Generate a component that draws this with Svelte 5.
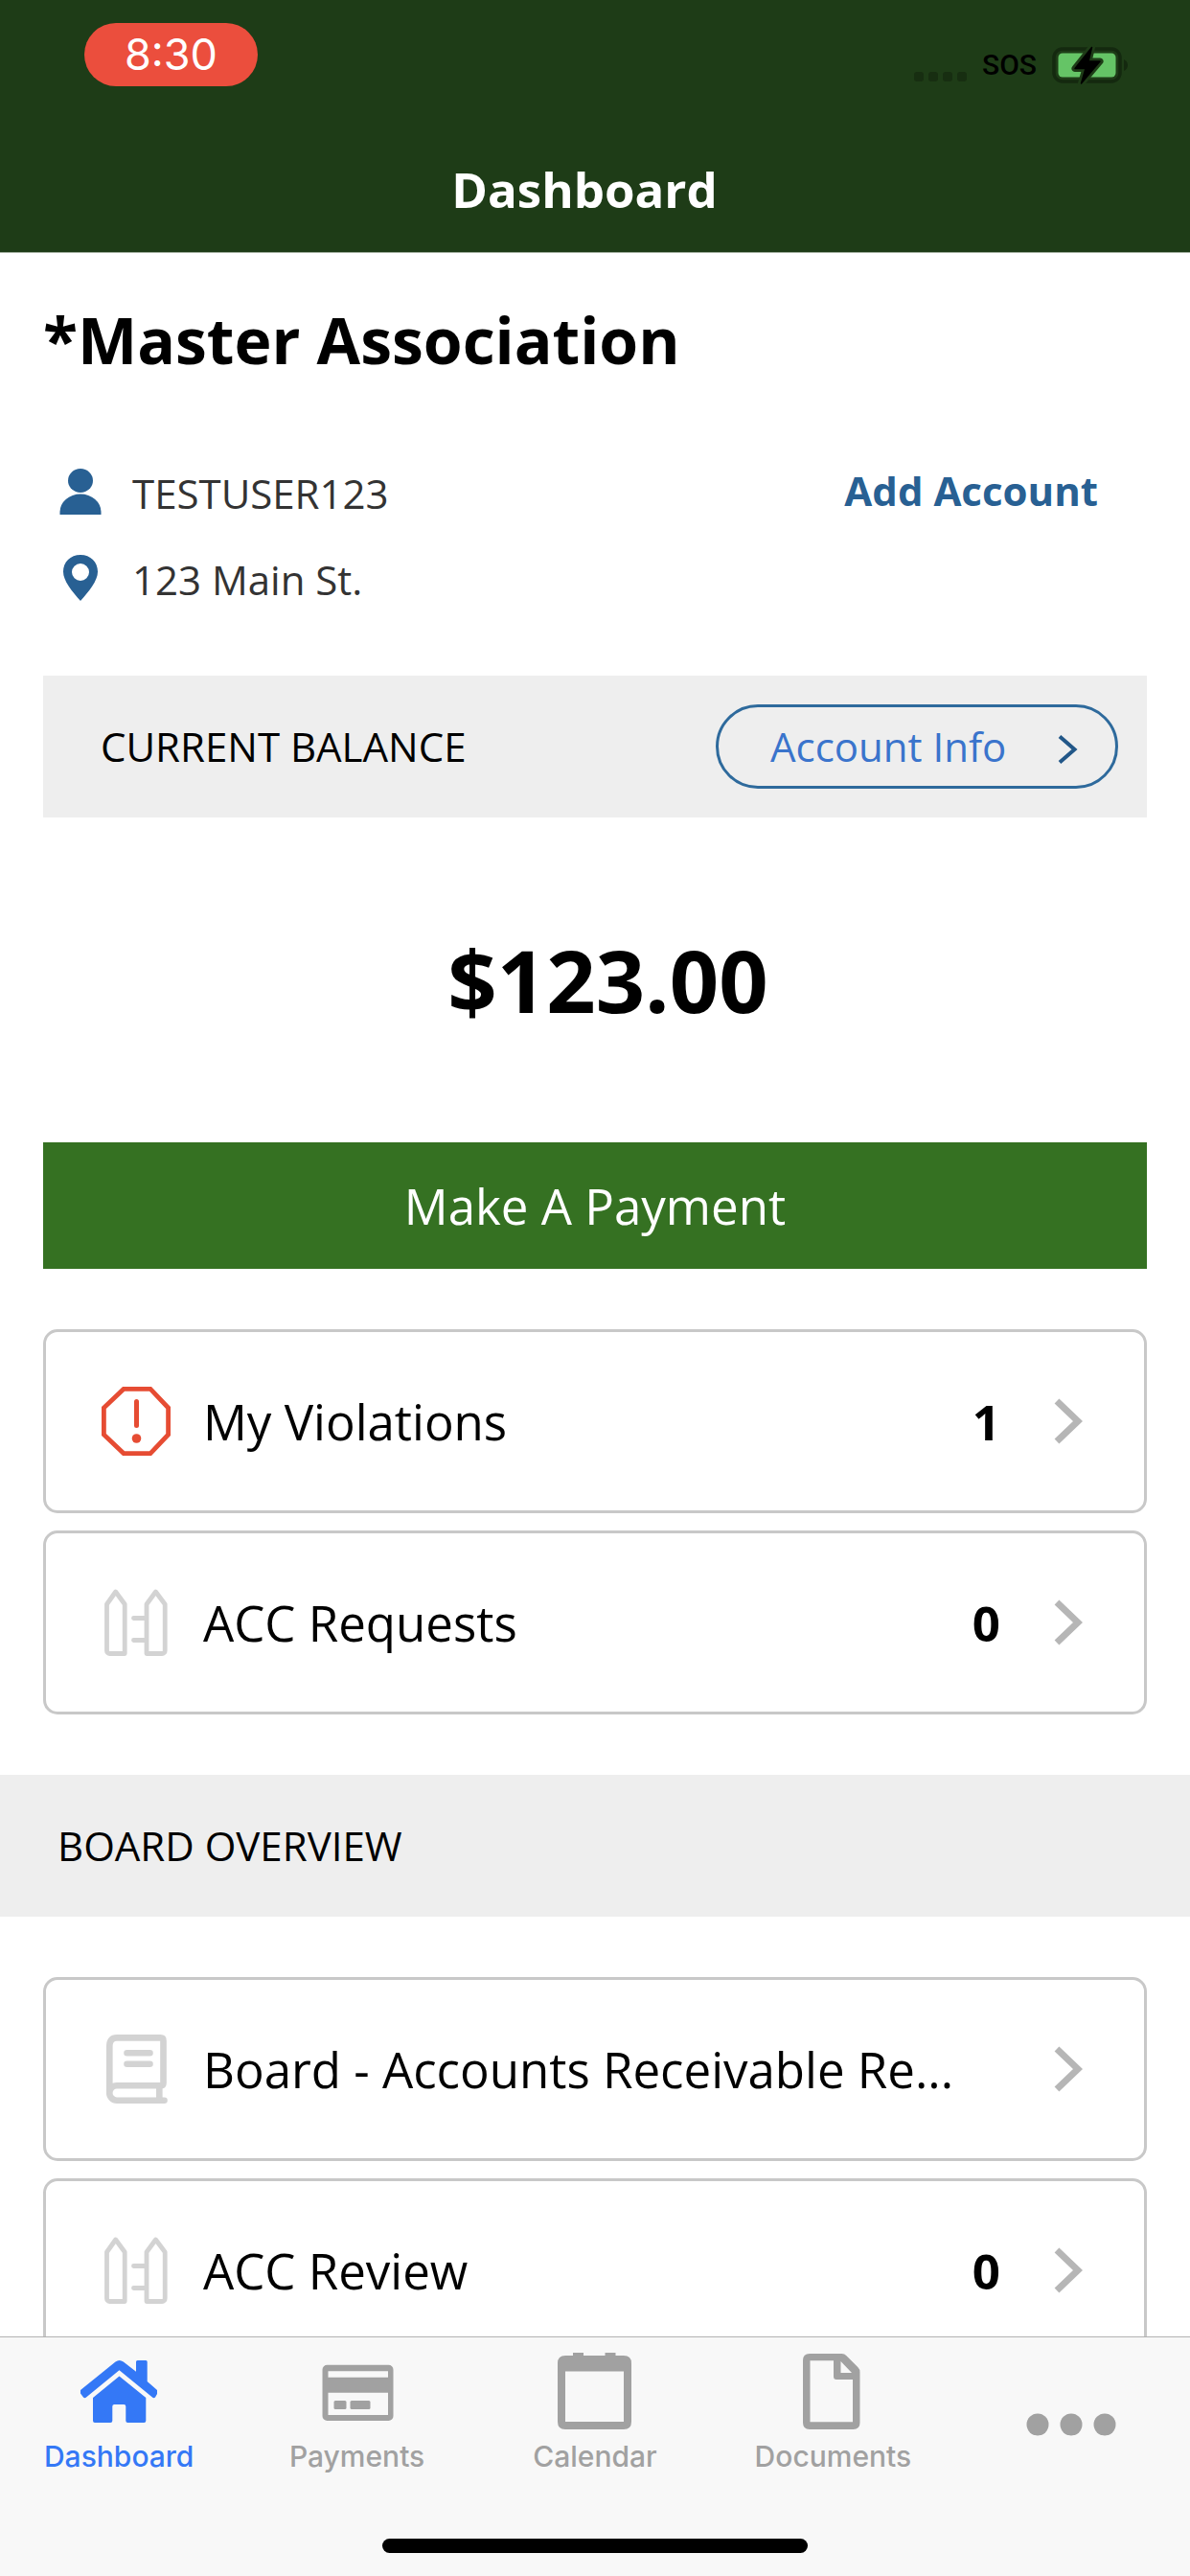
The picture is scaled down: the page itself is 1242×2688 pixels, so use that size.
<script>
    let title = 'Dashboard';
    let association = '*Master Association';
    let account = { user: 'TESTUSER123', address: '123 Main St.', balance: '$123.00' };

    const ownerItems = [
        { icon: 'violation', label: 'My Violations', count: 1 },
        { icon: 'fence', label: 'ACC Requests', count: 0 }
    ];

    const boardItems = [
        { icon: 'book', label: 'Board - Accounts Receivable Re...' },
        { icon: 'fence', label: 'ACC Review', count: 0 }
    ];

    const tabs = ['Dashboard', 'Payments', 'Calendar', 'Documents'];
    let active = 'Dashboard';
</script>

{#snippet itemList(items)}
    <ul class="items">
        {#each items as item}
            <li>
                <button class="item">
                    <svg class="item-icon {item.icon}" viewBox="0 0 72 72" aria-hidden="true">
                        {#if item.icon === 'violation'}
                            <path d="M23 2.4h28L69.6 22v28L51 69.6H23L2.4 50V22z" stroke-width="4.8" />
                            <path d="M36.5 15.5v25" stroke-width="5" stroke-linecap="round" />
                            <circle class="solid" cx="36.5" cy="54" r="4.8" />
                        {:else if item.icon === 'fence'}
                            <path d="M5.5 17l9.2-13 9.5 13v51.5H8.5a3 3 0 0 1-3-3z" stroke-width="4.8" stroke-linejoin="round" />
                            <path d="M47 17l9.5-13 9.7 13v48.5a3 3 0 0 1-3 3H47z" stroke-width="4.8" stroke-linejoin="round" />
                            <path d="M33.5 31.5H46M33.5 54.5H46" stroke-width="4.8" stroke-linecap="round" />
                        {:else}
                            <path d="M8.3 61V12Q8.3 3.4 16 3.4h45.5q3 0 3 3v44.5q0 2.300-3 2.300H16a7.7 7.7 0 0 0 0 15.500h49.5" stroke-width="6.6" stroke-linecap="round" />
                            <path d="M60.3 53v15" stroke-width="6.6" />
                            <path d="M26.5 19.3h24M26.5 30.7h24" stroke-width="6.6" stroke-linecap="round" />
                        {/if}
                    </svg>
                    <span class="item-label">{item.label}</span>
                    {#if item.count !== undefined}
                        <strong class="count">{item.count}</strong>
                    {/if}
                    <svg class="arrow" viewBox="0 0 30 48" aria-hidden="true">
                        <path d="M3 3l22 21L3 45" />
                    </svg>
                </button>
            </li>
        {/each}
    </ul>
{/snippet}

<div class="app">
    <header>
        <div class="status">
            <span class="clock">8:30</span>
            <div class="signals">
                <span class="dots"><i></i><i></i><i></i><i></i></span>
                <span class="sos">SOS</span>
                <svg class="battery" viewBox="0 0 80 42" aria-hidden="true">
                    <rect x="2" y="4" width="69" height="34" rx="9" fill="none" stroke="#14290f" stroke-width="3.5" />
                    <path d="M75 15q4 2 4 6t-4 6z" fill="#14290f" />
                    <rect x="6.500" y="8.500" width="60" height="25" rx="4.500" fill="#65c466" />
                    <path d="M41.500 2.500L24 24.500h11L30.500 40l19.500-23H38z" fill="#000" stroke="#1e3c17" stroke-width="7" stroke-linejoin="round" />
                    <path d="M41.500 2.500L24 24.500h11L30.500 40l19.500-23H38z" fill="#000" stroke="#000" stroke-width="1.500" stroke-linejoin="round" />
                </svg>
            </div>
        </div>
        <h1>{title}</h1>
    </header>

    <main>
        <section class="panel">
            <h2>{association}</h2>

            <div class="account">
                <div class="details">
                    <div class="detail">
                        <svg viewBox="0 0 48 48" aria-hidden="true">
                            <ellipse cx="24" cy="12.500" rx="13" ry="12.500" />
                            <path d="M2.500 48V45a21.500 18.500 0 0 1 43 0v3z" />
                        </svg>
                        <span>{account.user}</span>
                    </div>
                    <div class="detail">
                        <svg viewBox="0 0 48 48" aria-hidden="true">
                            <path fill-rule="evenodd" d="M24 0C13.500 0 6 7.500 6 17.500 6 27 15 38 24 48c9-10 18-21 18-30.500C42 7.500 34.500 0 24 0zm0 9a9 9 0 1 1 0 18 9 9 0 0 1 0-18z" />
                        </svg>
                        <span>{account.address}</span>
                    </div>
                </div>
                <a class="add" href="#add">Add Account</a>
            </div>

            <div class="balance-bar">
                <span>CURRENT BALANCE</span>
                <button class="info">
                    Account Info
                    <svg viewBox="0 0 22 30" aria-hidden="true">
                        <path d="M2 1.500L17.500 15 2 28.500" />
                    </svg>
                </button>
            </div>

            <p class="amount">{account.balance}</p>
            <button class="pay">Make A Payment</button>

            {@render itemList(ownerItems)}
        </section>

        <h3>BOARD OVERVIEW</h3>

        <section class="panel">
            {@render itemList(boardItems)}
        </section>
    </main>

    <nav>
        <div class="tabs">
            {#each tabs as tab}
                <button class="tab" class:active={tab === active} on:click={() => (active = tab)}>
                    <svg viewBox="0 0 84 84" fill-rule="evenodd" aria-hidden="true">
                        {#if tab === 'Dashboard'}
                            <path d="M38.500 11.500q4-3 8.300 0L60 21.700V11.500q0-1.500 1.500-1.500h8.700q1.500 0 1.500 1.500V32L82 41v4l-2 3.500q-1.500 1.500-3 0L42.500 20.300 8 48.500q-1.500 1.500-3 0L2 44.500V41z" />
                            <path d="M42.500 26.500L70.300 49v24q0 2-2 2H51.300q-2 0-2-2V58q0-2-2-2h-10q-2 0-2 2v15q0 2-2 2H17q-2 0-2-2V49z" />
                        {:else if tab === 'Payments'}
                            <path d="M10.500 14.700h64a5 5 0 0 1 5 5V68a5 5 0 0 1-5 5h-64a5 5 0 0 1-5-5V19.700a5 5 0 0 1 5-5zM11.500 21.300v6.500h62.500v-6.500zM11.500 43.700V67h62.500V43.700z" />
                            <rect x="17.500" y="52" width="13" height="9" rx="1.500" />
                            <rect x="34.500" y="52" width="21" height="9" rx="1.500" />
                        {:else if tab === 'Calendar'}
                            <path d="M11 5h8V2h11v3h22.500V2h11v3H72q8 0 8 8v61q0 8-8 8H11q-8 0-8-8V13q0-8 8-8zm0 16.500V74h61V21.500z" />
                        {:else}
                            <path d="M18 3h33.500q3 0 5 2.300l12 12q2 2 2 5V75q0 7-7 7H18q-7 0-7-7V10q0-7 7-7zm.5 7.300v64h44.500V30H46q-3 0-3-3V10.300zM50.500 11v12H62z" />
                        {/if}
                    </svg>
                    <span>{tab}</span>
                </button>
            {/each}
            <button class="tab more" aria-label="More">
                <svg viewBox="0 0 94 24" aria-hidden="true">
                    <circle cx="12" cy="12" r="11.500" />
                    <circle cx="47" cy="12" r="11.500" />
                    <circle cx="82" cy="12" r="11.500" />
                </svg>
            </button>
        </div>
        <div class="home-indicator"></div>
    </nav>
</div>

<style>
    :global(body) {
        background: #fff;
    }
    .app {
        display: flex;
        flex-direction: column;
        height: 100vh;
        font: 42px/60px "Open Sans", sans-serif;
        color: #000;
    }
    h1, h2, h3, p, ul {
        margin: 0;
        padding: 0;
    }
    button {
        margin: 0;
        padding: 0;
        border: none;
        background: none;
        color: inherit;
        font: inherit;
        cursor: pointer;
    }
    svg {
        flex: none;
    }

    header {
        flex: none;
        background: #1e3c17;
        border-bottom: 1px solid #a5b1a2;
    }
    .status {
        display: flex;
        justify-content: space-between;
        align-items: flex-start;
        box-sizing: border-box;
        height: 131px;
        padding: 24px 64px 0 88px;
    }
    .clock {
        width: 181px;
        border-radius: 33px;
        background: #eb4e3d;
        color: #fff;
        font: 45px/66px Inter, sans-serif;
        text-align: center;
    }
    .signals {
        display: flex;
        align-items: center;
        gap: 16px;
        height: 88px;
    }
    .dots {
        display: flex;
        gap: 5px;
        padding-top: 24px;
    }
    .dots i {
        width: 10px;
        height: 10px;
        border-radius: 3px;
        background: #172e11;
    }
    .sos {
        color: #000;
        font: 500 30px/40px Roboto, sans-serif;
    }
    .battery {
        width: 80px;
        height: 42px;
    }
    h1 {
        padding-right: 22px;
        color: #fff;
        font-size: 51px;
        line-height: 132px;
        text-align: center;
    }

    main {
        flex: 1;
        min-height: 0;
        overflow-y: auto;
        scrollbar-width: none;
    }
    .panel {
        display: flex;
        flex-direction: column;
        padding: 0 45px;
    }
    h2 {
        padding: 45px 0 86px;
        font-size: 66px;
        line-height: 90px;
    }
    .account {
        display: flex;
        justify-content: space-between;
        align-items: flex-start;
        padding: 0 51px 70px 15px;
    }
    .details {
        display: flex;
        flex-direction: column;
        gap: 30px;
        color: #333;
    }
    .detail {
        display: flex;
        align-items: center;
        gap: 30px;
    }
    .detail svg {
        width: 48px;
        height: 48px;
        margin-bottom: 4px;
        fill: #286093;
    }
    .add {
        color: #286093;
        font-weight: bold;
        line-height: 54px;
        text-decoration: none;
    }
    .balance-bar {
        display: flex;
        justify-content: space-between;
        align-items: center;
        height: 148px;
        padding: 0 30px 0 60px;
        background: #eee;
    }
    .info {
        display: flex;
        justify-content: space-between;
        align-items: center;
        box-sizing: border-box;
        width: 420px;
        height: 88px;
        padding: 0 38px 0 54px;
        border: 3px solid #2e6a9c;
        border-radius: 44px;
        color: #3a74cc;
    }
    .info svg {
        width: 22px;
        height: 30px;
        margin-top: 6px;
        fill: none;
        stroke: #225788;
        stroke-width: 4;
    }
    .amount {
        padding: 109px 0 110px 27px;
        font-size: 90px;
        font-weight: bold;
        line-height: 120px;
        text-align: center;
    }
    .pay {
        height: 132px;
        background: #357122;
        color: #fff;
        font-size: 51px;
    }

    .items {
        display: flex;
        flex-direction: column;
        gap: 18px;
        padding: 63px 0;
        list-style: none;
    }
    .item {
        display: flex;
        align-items: center;
        box-sizing: border-box;
        width: 100%;
        height: 192px;
        padding: 0 64px 0 58px;
        border: 3px solid #c8c8c8;
        border-radius: 15px;
        font-size: 51px;
        line-height: 72px;
        text-align: left;
    }
    .item-icon {
        width: 72px;
        height: 72px;
        margin-right: 34px;
        fill: none;
        stroke: #d3d3d3;
    }
    .item-icon.violation {
        stroke: #e64c33;
    }
    .solid {
        fill: #e64c33;
        stroke: none;
    }
    .item-label {
        flex: 1;
        white-space: nowrap;
    }
    .arrow {
        width: 30px;
        height: 48px;
        margin-left: 56px;
        fill: none;
        stroke: #b6b6b6;
        stroke-width: 7;
    }
    h3 {
        padding: 0 60px;
        background: #eee;
        font-size: 42px;
        font-weight: normal;
        line-height: 148px;
    }

    nav {
        flex: none;
        padding: 14px 0 24px;
        border-top: 1px solid #b2b2b2;
        background: #f8f8f8;
    }
    .tabs {
        display: grid;
        grid-template-columns: repeat(5, 1fr);
        height: 154px;
    }
    .tab {
        display: flex;
        flex-direction: column;
        align-items: center;
        gap: 8px;
        color: #a1a1a1;
        font: 500 30px/36px Inter, sans-serif;
    }
    .tab.active {
        color: #3478f6;
    }
    .tab svg {
        width: 84px;
        height: 84px;
        fill: currentColor;
    }
    .tab.more {
        justify-content: center;
    }
    .tab.more svg {
        width: 94px;
        height: 24px;
    }
    .home-indicator {
        width: 444px;
        height: 15px;
        margin: 42px auto 0;
        border-radius: 8px;
        background: #000;
    }
</style>
